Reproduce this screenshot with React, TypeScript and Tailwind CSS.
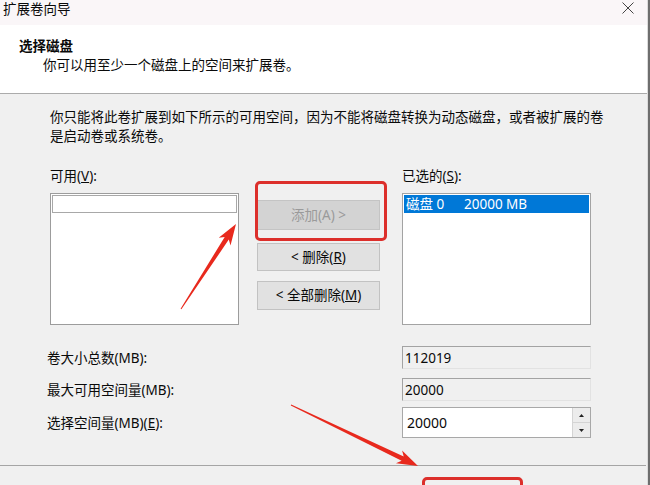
import React from "react";

// Builds a tapered arrow (thin tail, flared head) as polygon points.
function arrowPoints(
  x1: number,
  y1: number,
  x2: number,
  y2: number,
  headLen = 20,
  headHalf = 7,
  neckHalf = 2.4,
  tailHalf = 0.5
): string {
  const dx = x2 - x1;
  const dy = y2 - y1;
  const len = Math.hypot(dx, dy);
  const ux = dx / len;
  const uy = dy / len;
  const nx = -uy;
  const ny = ux;
  const bx = x2 - ux * headLen;
  const by = y2 - uy * headLen;
  const pts: [number, number][] = [
    [x1 + nx * tailHalf, y1 + ny * tailHalf],
    [bx + ux * 3 + nx * neckHalf, by + uy * 3 + ny * neckHalf],
    [bx - ux * 1 + nx * headHalf, by - uy * 1 + ny * headHalf],
    [x2, y2],
    [bx - ux * 1 - nx * headHalf, by - uy * 1 - ny * headHalf],
    [bx + ux * 3 - nx * neckHalf, by + uy * 3 - ny * neckHalf],
    [x1 - nx * tailHalf, y1 - ny * tailHalf],
  ];
  return pts.map(([x, y]) => `${x.toFixed(1)},${y.toFixed(1)}`).join(" ");
}

function ReadOnlyField({ value }: { value: string }) {
  return (
    <div className="w-[189px] h-[23px] bg-[#f0f0f0] border-t border-l border-[#a3a3a3] border-r border-r-[#e2e2e2] border-b border-b-[#e2e2e2] flex items-center pl-[2px] leading-[18px]">
      {value}
    </div>
  );
}

export default function App() {
  return (
    <div className="w-[650px] h-[485px] overflow-hidden flex bg-[#f0f0f0] text-[13.5px] text-[#0a0a0a] font-['Noto_Sans','Noto_Sans_CJK_SC',sans-serif]">
      <div className="relative w-[647px] h-full flex flex-col">
        {/* title bar */}
        <div className="h-[25px] bg-[#faf6f8] flex items-start justify-between">
          <span className="pl-[3px] leading-[18px]">扩展卷向导</span>
          <svg width="14" height="14" viewBox="0 0 14 14" className="mt-[1px] mr-[12px]">
            <path d="M1.5 1.5 L12.5 12.5 M12.5 1.5 L1.5 12.5" stroke="#444" strokeWidth="1" fill="none" />
          </svg>
        </div>

        {/* wizard header */}
        <div className="h-[69px] bg-white border-b border-[#ababab] pl-[19px] pt-[11px]">
          <div className="font-bold leading-[20px]">选择磁盘</div>
          <div className="pl-[24px] leading-[18px]">你可以用至少一个磁盘上的空间来扩展卷。</div>
        </div>

        {/* wizard body */}
        <div className="pt-[14px]">
          <p className="pl-[50px] leading-[19px]">
            你只能将此卷扩展到如下所示的可用空间，因为不能将磁盘转换为动态磁盘，或者被扩展的卷
            <br />
            是启动卷或系统卷。
          </p>

          <div className="flex mt-[21px] pl-[50px] leading-[18px]">
            <div className="w-[352px]">
              可用(<u>V</u>):
            </div>
            <div>
              已选的(<u>S</u>):
            </div>
          </div>

          <div className="flex mt-[8px] pl-[50px]">
            {/* available list */}
            <div className="w-[189px] h-[132px] bg-white border border-[#9c9c9c] p-[1px]">
              <div className="h-[18px] border border-[#a8a8a8]" />
            </div>

            {/* move buttons */}
            <div className="w-[123px] ml-[18px] pt-[7px] flex flex-col">
              <div className="h-[30px] bg-[#d3d3d3] border border-[#c4c4c4] flex items-center justify-center text-[#9a9a9a]">
                添加(A) &gt;
              </div>
              <div className="mt-[13px] h-[28px] bg-[#e1e1e1] border border-[#c2c2c2] flex items-center justify-center">
                &lt; 删除(<u>R</u>)
              </div>
              <div className="mt-[10px] h-[29px] bg-[#e1e1e1] border border-[#c2c2c2] flex items-center justify-center">
                &lt; 全部删除(<u>M</u>)
              </div>
            </div>

            {/* selected list */}
            <div className="w-[189px] h-[132px] ml-[22px] bg-white border border-[#a3a3a3] p-[1px]">
              <div className="h-[18px] bg-[#0078d7] text-white flex items-center pl-[2px] leading-[18px]">
                <span className="w-[58px]">磁盘 0</span>
                <span>20000 MB</span>
              </div>
            </div>
          </div>

          {/* size fields */}
          <div className="mt-[21px] pl-[47px] pr-[56px] flex flex-col leading-[18px]">
            <div className="flex items-center justify-between">
              <span>卷大小总数(MB):</span>
              <ReadOnlyField value="112019" />
            </div>
            <div className="flex items-center justify-between mt-[9px]">
              <span>最大可用空间量(MB):</span>
              <ReadOnlyField value="20000" />
            </div>
            <div className="flex items-center justify-between mt-[6px]">
              <span>
                选择空间量(MB)(<u>E</u>):
              </span>
              <div className="w-[189px] h-[31px] bg-white border border-[#a8a8a8] flex">
                <div className="flex-1 flex items-center pl-[4px] text-[14px]">20000</div>
                <div className="w-[18px] flex flex-col border-l border-[#d4d4d4]">
                  <div className="flex-1 bg-[#ececec] border-b border-[#d4d4d4] flex items-center justify-center">
                    <svg width="5" height="3" viewBox="0 0 5 3">
                      <path d="M2.5 0 L5 3 L0 3 Z" fill="#222" />
                    </svg>
                  </div>
                  <div className="flex-1 bg-[#ececec] flex items-center justify-center">
                    <svg width="5" height="3" viewBox="0 0 5 3">
                      <path d="M0 0 L5 0 L2.5 3 Z" fill="#222" />
                    </svg>
                  </div>
                </div>
              </div>
            </div>
          </div>

          {/* footer separator */}
          <div className="mt-[27px] mr-[1px] border-t border-[#a5a5a5]" />
        </div>

        {/* red highlight boxes */}
        <div className="absolute left-[255px] top-[181px] w-[132px] h-[60px] border-[3px] border-[#dc2f2b] rounded-[5px]" />
        <div className="absolute left-[422px] top-[477px] w-[101px] h-[30px] border-[3px] border-[#dc2f2b] rounded-[5px]" />

        {/* red pointer arrows */}
        <svg className="absolute left-0 top-0 pointer-events-none" width="647" height="485">
          <polygon points={arrowPoints(181, 309, 236, 224)} fill="#e8291d" />
          <polygon points={arrowPoints(291, 405, 418, 466)} fill="#e8291d" />
        </svg>
      </div>

      {/* edge of the window frame */}
      <div className="w-[1px] h-full bg-[#dcdcdc]" />
      <div className="w-[2px] h-full bg-[#6e6e6e]" />
    </div>
  );
}
